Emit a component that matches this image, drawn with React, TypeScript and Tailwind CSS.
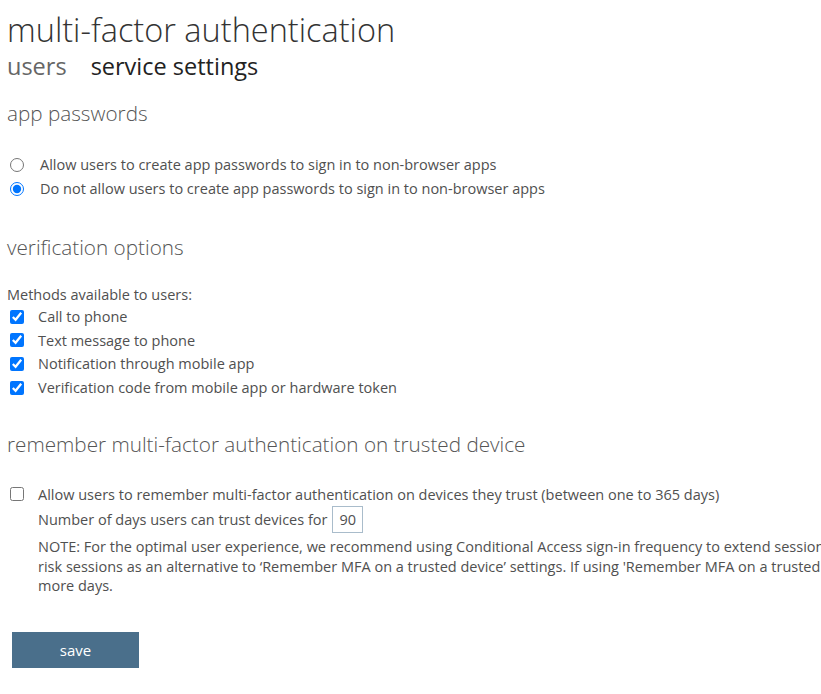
import React from "react";

const font = { fontFamily: '"Open Sans", "Noto Sans", Arial, sans-serif' };

function Radio({ checked, label }: { checked?: boolean; label: string }) {
  return (
    <label className="flex h-[24px] items-center">
      <input
        type="radio"
        name="apppw"
        defaultChecked={checked}
        className="m-0 ml-[10px] h-[14px] w-[14px] accent-[#0075ff]"
      />
      <span className="ml-[16px]">{label}</span>
    </label>
  );
}

function Check({ checked, label }: { checked?: boolean; label: string }) {
  return (
    <label className="flex h-[23.6px] items-center">
      <input
        type="checkbox"
        defaultChecked={checked}
        className="m-0 ml-[10px] h-[14px] w-[14px] accent-[#0075ff]"
      />
      <span className="ml-[14px]">{label}</span>
    </label>
  );
}

export default function App() {
  return (
    <div
      className="w-full min-h-[694px] overflow-hidden bg-white text-[14.5px] text-[#505050]"
      style={font}
    >
      <div className="w-[1200px] pl-[7px]">
        <h1 className="pt-[10px] text-[32.5px] font-light leading-[40px] text-[#333]">
          multi-factor authentication
        </h1>
        <div className="flex h-[32px] items-center gap-[24px] text-[23.5px] leading-[30px]">
          <span className="text-[#666]">users</span>
          <span className="text-[#222]">service settings</span>
        </div>

        <h2 className="mt-[17px] text-[20.7px] font-light leading-[28px] text-[#555]">
          app passwords
        </h2>
        <div className="mt-[26px] -ml-[7px]">
          <Radio label="Allow users to create app passwords to sign in to non-browser apps" />
          <Radio checked label="Do not allow users to create app passwords to sign in to non-browser apps" />
        </div>

        <h2 className="mt-[32px] text-[20.7px] font-light leading-[28px] text-[#555]">
          verification options
        </h2>
        <div className="mt-[24px] leading-[20px]">Methods available to users:</div>
        <div className="-ml-[7px]">
          <Check checked label="Call to phone" />
          <Check checked label="Text message to phone" />
          <Check checked label="Notification through mobile app" />
          <Check checked label="Verification code from mobile app or hardware token" />
        </div>

        <h2 className="mt-[31px] text-[20.7px] font-light leading-[28px] text-[#555]">
          remember multi-factor authentication on trusted device
        </h2>
        <div className="mt-[24px] -ml-[7px]">
          <label className="flex h-[24px] items-center">
            <input
              type="checkbox"
              className="m-0 ml-[10px] h-[14px] w-[14px] accent-[#0075ff]"
            />
            <span className="ml-[14px]">
              Allow users to remember multi-factor authentication on devices they trust (between one to 365 days)
            </span>
          </label>
          <div className="ml-[38px]">
            <div className="flex h-[27px] items-center">
              <span>Number of days users can trust devices for</span>
              <input
                type="text"
                defaultValue="90"
                className="ml-[5px] h-[27px] w-[31px] border border-[#a9bccb] px-[6px] text-[14.5px] text-[#505050] outline-none"
                style={font}
              />
            </div>
            <div className="mt-[4px] whitespace-nowrap leading-[19.5px]">
              <div>
                NOTE: For the optimal user experience, we recommend using Conditional Access sign-in frequency to extend session lifetimes on trusted devices, locations, or low-
              </div>
              <div>
                risk sessions as an alternative to ‘Remember MFA on a trusted device’ settings. If using 'Remember MFA on a trusted device,' ensure to extend the duration to 90 or
              </div>
              <div>more days.</div>
            </div>
          </div>
        </div>

        <button
          type="button"
          className="mt-[36px] ml-[5px] flex h-[36px] w-[127px] items-center justify-center bg-[#4a6f8b] text-[15px] text-white"
        >
          save
        </button>
      </div>
    </div>
  );
}
